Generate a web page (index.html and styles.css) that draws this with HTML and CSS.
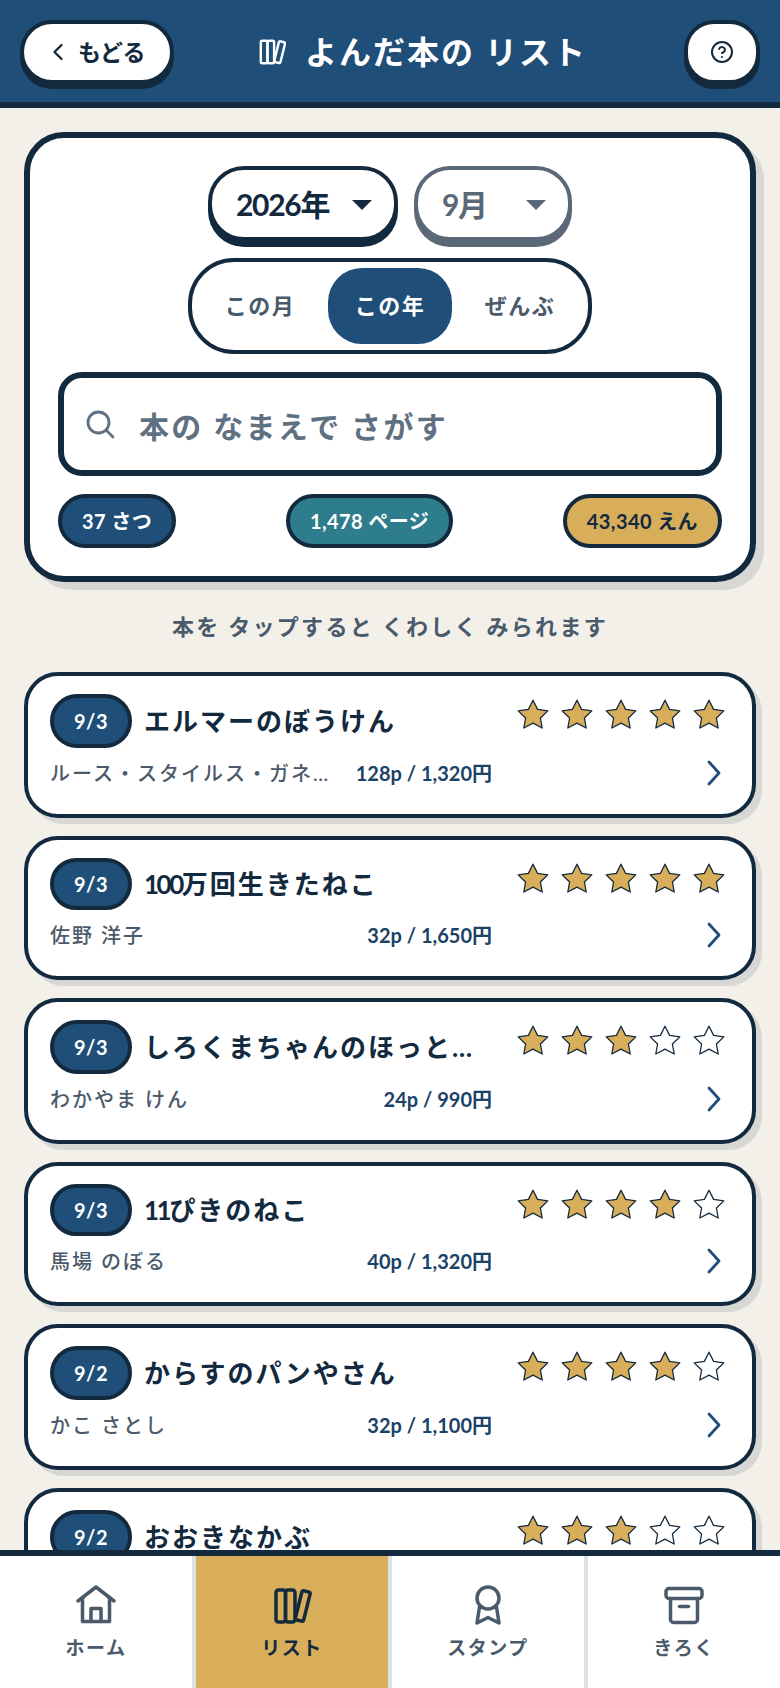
FILE: index.html
```html
<!DOCTYPE html>
<html lang="ja">
<head>
<meta charset="utf-8">
<title>よんだ本の リスト</title>
<link rel="stylesheet" href="styles.css">
</head>
<body>
<div class="app">
  <header class="topbar">
    <button class="back-btn" type="button">
      <svg class="back-icon" viewBox="0 0 24 24"><path d="M15 18l-6-6 6-6"/></svg>
      <span>もどる</span>
    </button>
    <h1 class="page-title">
      <svg class="title-icon" viewBox="0 0 40 40"><rect x="4" y="4" width="9.5" height="32" rx="2"/><rect x="13.5" y="4" width="9.5" height="32" rx="2"/><rect x="26.5" y="5" width="9" height="30.5" rx="2" transform="rotate(14 31 20)"/></svg>
      <span>よんだ本の リスト</span>
    </h1>
    <button class="help-btn" type="button" aria-label="ヘルプ">
      <svg class="help-icon" viewBox="0 0 24 24"><circle cx="12" cy="12" r="10"/><path d="M9.1 9a3 3 0 0 1 5.8 1c0 2-3 3-3 3"/><path d="M12 17h.01"/></svg>
    </button>
  </header>

  <main class="content">
    <section class="panel">
      <div class="selects">
        <div class="select select-year">
          <span>2026年</span>
          <svg class="caret" viewBox="0 0 20 10"><path d="M0 0H20L10 10Z"/></svg>
        </div>
        <div class="select select-month">
          <span>9月</span>
          <svg class="caret" viewBox="0 0 20 10"><path d="M0 0H20L10 10Z"/></svg>
        </div>
      </div>
      <div class="toggle">
        <button class="toggle-item" type="button">この月</button>
        <button class="toggle-item is-active" type="button">この年</button>
        <button class="toggle-item" type="button">ぜんぶ</button>
      </div>
      <label class="search">
        <svg class="search-icon" viewBox="0 0 32 32"><circle cx="14.5" cy="14.5" r="10.5"/><path d="M22.5 22.5L29 29"/></svg>
        <input class="search-input" type="text" placeholder="本の なまえで さがす">
      </label>
      <div class="stats">
        <span class="stat stat-books">37 さつ</span>
        <span class="stat stat-pages">1,478 ページ</span>
        <span class="stat stat-yen">43,340 えん</span>
      </div>
    </section>

    <p class="hint">本を タップすると くわしく みられます</p>

    <div class="cards">
      <article class="card">
        <div class="card-top">
          <div class="lead"><span class="date">9/3</span><span class="book-title">エルマーのぼうけん</span></div>
          <div class="stars">
            <svg class="star on" viewBox="0 0 32 30"><use href="#star"/></svg><svg class="star on" viewBox="0 0 32 30"><use href="#star"/></svg><svg class="star on" viewBox="0 0 32 30"><use href="#star"/></svg><svg class="star on" viewBox="0 0 32 30"><use href="#star"/></svg><svg class="star on" viewBox="0 0 32 30"><use href="#star"/></svg>
          </div>
        </div>
        <div class="card-bottom">
          <div class="info"><span class="author">ルース・スタイルス・ガネット</span><span class="price">128p / 1,320円</span></div>
          <svg class="chev" viewBox="0 0 16 26"><path d="M3 2L13 13L3 24"/></svg>
        </div>
      </article>

      <article class="card card-short">
        <div class="card-top">
          <div class="lead"><span class="date">9/3</span><span class="book-title"><span class="num">100</span>万回生きたねこ</span></div>
          <div class="stars">
            <svg class="star on" viewBox="0 0 32 30"><use href="#star"/></svg><svg class="star on" viewBox="0 0 32 30"><use href="#star"/></svg><svg class="star on" viewBox="0 0 32 30"><use href="#star"/></svg><svg class="star on" viewBox="0 0 32 30"><use href="#star"/></svg><svg class="star on" viewBox="0 0 32 30"><use href="#star"/></svg>
          </div>
        </div>
        <div class="card-bottom">
          <div class="info"><span class="author">佐野 洋子</span><span class="price">32p / 1,650円</span></div>
          <svg class="chev" viewBox="0 0 16 26"><path d="M3 2L13 13L3 24"/></svg>
        </div>
      </article>

      <article class="card">
        <div class="card-top">
          <div class="lead"><span class="date">9/3</span><span class="book-title">しろくまちゃんのほっとけーき</span></div>
          <div class="stars">
            <svg class="star on" viewBox="0 0 32 30"><use href="#star"/></svg><svg class="star on" viewBox="0 0 32 30"><use href="#star"/></svg><svg class="star on" viewBox="0 0 32 30"><use href="#star"/></svg><svg class="star" viewBox="0 0 32 30"><use href="#star"/></svg><svg class="star" viewBox="0 0 32 30"><use href="#star"/></svg>
          </div>
        </div>
        <div class="card-bottom">
          <div class="info"><span class="author">わかやま けん</span><span class="price">24p / 990円</span></div>
          <svg class="chev" viewBox="0 0 16 26"><path d="M3 2L13 13L3 24"/></svg>
        </div>
      </article>

      <article class="card card-short">
        <div class="card-top">
          <div class="lead"><span class="date">9/3</span><span class="book-title"><span class="num">11</span>ぴきのねこ</span></div>
          <div class="stars">
            <svg class="star on" viewBox="0 0 32 30"><use href="#star"/></svg><svg class="star on" viewBox="0 0 32 30"><use href="#star"/></svg><svg class="star on" viewBox="0 0 32 30"><use href="#star"/></svg><svg class="star on" viewBox="0 0 32 30"><use href="#star"/></svg><svg class="star" viewBox="0 0 32 30"><use href="#star"/></svg>
          </div>
        </div>
        <div class="card-bottom">
          <div class="info"><span class="author">馬場 のぼる</span><span class="price">40p / 1,320円</span></div>
          <svg class="chev" viewBox="0 0 16 26"><path d="M3 2L13 13L3 24"/></svg>
        </div>
      </article>

      <article class="card">
        <div class="card-top">
          <div class="lead"><span class="date">9/2</span><span class="book-title">からすのパンやさん</span></div>
          <div class="stars">
            <svg class="star on" viewBox="0 0 32 30"><use href="#star"/></svg><svg class="star on" viewBox="0 0 32 30"><use href="#star"/></svg><svg class="star on" viewBox="0 0 32 30"><use href="#star"/></svg><svg class="star on" viewBox="0 0 32 30"><use href="#star"/></svg><svg class="star" viewBox="0 0 32 30"><use href="#star"/></svg>
          </div>
        </div>
        <div class="card-bottom">
          <div class="info"><span class="author">かこ さとし</span><span class="price">32p / 1,100円</span></div>
          <svg class="chev" viewBox="0 0 16 26"><path d="M3 2L13 13L3 24"/></svg>
        </div>
      </article>

      <article class="card">
        <div class="card-top">
          <div class="lead"><span class="date">9/2</span><span class="book-title">おおきなかぶ</span></div>
          <div class="stars">
            <svg class="star on" viewBox="0 0 32 30"><use href="#star"/></svg><svg class="star on" viewBox="0 0 32 30"><use href="#star"/></svg><svg class="star on" viewBox="0 0 32 30"><use href="#star"/></svg><svg class="star" viewBox="0 0 32 30"><use href="#star"/></svg><svg class="star" viewBox="0 0 32 30"><use href="#star"/></svg>
          </div>
        </div>
      </article>
    </div>
  </main>

  <nav class="tabbar">
    <a class="tab">
      <svg class="tab-icon" viewBox="0 0 40 40"><path d="M2 16L20 2L38 16"/><path d="M6.500 13V36.500H33.500V13"/><path d="M15 36.500V23.500H25V36.500"/></svg>
      <span class="tab-label">ホーム</span>
    </a>
    <a class="tab is-current">
      <svg class="tab-icon" viewBox="0 0 40 40"><rect x="4" y="5" width="9.500" height="32" rx="2.500"/><rect x="13.500" y="5" width="9.500" height="32" rx="2.500"/><rect x="26.500" y="6" width="8.500" height="30" rx="2" transform="rotate(14 31 21)"/></svg>
      <span class="tab-label">リスト</span>
    </a>
    <a class="tab">
      <svg class="tab-icon" viewBox="0 0 40 40"><circle cx="20" cy="13" r="11"/><path d="M11.500 22L9 38L20 32.500L31 38L28.500 22"/></svg>
      <span class="tab-label">スタンプ</span>
    </a>
    <a class="tab">
      <svg class="tab-icon" viewBox="0 0 40 40"><rect x="2" y="3.500" width="36" height="10" rx="3"/><path d="M6.500 13.500V34.500A3 3 0 0 0 9.500 37.500H30.500A3 3 0 0 0 33.500 34.500V13.500"/><path d="M15.500 21.500H24.500"/></svg>
      <span class="tab-label">きろく</span>
    </a>
  </nav>
</div>

<svg class="defs" aria-hidden="true">
  <symbol id="star" viewBox="0 0 32 30">
    <path d="M16 1.200L20.600 10.400L30.800 11.900L23.400 19L25.200 29L16 24.200L6.800 29L8.600 19L1.200 11.900L11.400 10.400Z"/>
  </symbol>
</svg>
</body>
</html>
```

FILE: styles.css
```css
* { box-sizing: border-box; }

html, body {
  margin: 0;
  padding: 0;
  height: 100%;
}

body {
  background: #f3f0ea;
  color: #132a3e;
  font-family: "Lato", "Noto Sans CJK JP", "Noto Sans", sans-serif;
  font-weight: 700;
  overflow: hidden;
}

button {
  font: inherit;
  color: inherit;
  padding: 0;
  cursor: pointer;
}

.defs {
  width: 0;
  height: 0;
  position: absolute;
}

.app {
  height: 100vh;
  display: flex;
  flex-direction: column;
}

/* header */
.topbar {
  flex: none;
  height: 108px;
  padding: 20px 20px 18px;
  background: #1f4e79;
  border-bottom: 6px solid #132a3e;
  display: flex;
  align-items: center;
}

.back-btn {
  width: 154px;
  height: 64px;
  padding-left: 20px;
  background: #fff;
  border: 4px solid #132a3e;
  border-radius: 32px;
  box-shadow: 0 5px 0 #132a3e;
  display: flex;
  align-items: center;
  gap: 6px;
  font-size: 23px;
  line-height: 32px;
  letter-spacing: -0.5px;
}

.back-icon {
  width: 28px;
  height: 28px;
  fill: none;
  stroke: #132a3e;
  stroke-width: 2;
  stroke-linecap: round;
  stroke-linejoin: round;
}

.page-title {
  flex: 1;
  margin: 0;
  padding-right: 13px;
  display: flex;
  align-items: center;
  justify-content: center;
  gap: 19px;
  color: #fff;
  font-size: 32px;
  line-height: 40px;
  font-weight: 700;
  letter-spacing: 2px;
}

.title-icon {
  width: 28px;
  height: 28px;
  fill: none;
  stroke: #fff;
  stroke-width: 3.500;
}

.help-btn {
  width: 76px;
  height: 64px;
  background: #fff;
  border: 4px solid #132a3e;
  border-radius: 30px;
  box-shadow: 0 5px 0 #132a3e;
  display: flex;
  align-items: center;
  justify-content: center;
}

.help-icon {
  width: 24px;
  height: 24px;
  fill: none;
  stroke: #132a3e;
  stroke-width: 2;
  stroke-linecap: round;
  stroke-linejoin: round;
}

/* content */
.content {
  flex: 1;
  min-height: 0;
  overflow: hidden;
  padding: 24px 24px 0;
}

.panel {
  height: 450px;
  padding: 28px;
  background: #fff;
  border: 6px solid #132a3e;
  border-radius: 40px;
  box-shadow: 8px 8px 0 rgba(19, 42, 62, 0.12);
  display: flex;
  flex-direction: column;
  align-items: center;
}

.selects {
  display: flex;
  gap: 16px;
}

.select {
  height: 75px;
  padding: 0 22px 0 24px;
  background: #fff;
  border: 4px solid currentColor;
  border-radius: 36px;
  display: flex;
  align-items: center;
  justify-content: space-between;
  font-size: 30px;
  line-height: 40px;
  letter-spacing: -1.300px;
}

.select-year {
  width: 190px;
  color: #132a3e;
  box-shadow: 0 6px 0 #132a3e;
}

.select-month {
  width: 158px;
  color: #5a6878;
  box-shadow: 0 6px 0 #5a6878;
}

.caret {
  width: 20px;
  height: 10px;
  fill: currentColor;
  margin-top: 3px;
}

.toggle {
  margin-top: 17px;
  padding: 6px;
  width: 404px;
  height: 96px;
  border: 4px solid #132a3e;
  border-radius: 46px;
  display: flex;
  gap: 6px;
}

.toggle-item {
  flex: 1;
  background: transparent;
  border: 0;
  border-radius: 34px;
  color: #4a5a6a;
  font-size: 22px;
  line-height: 30px;
  letter-spacing: 1.500px;
}

.toggle-item.is-active {
  background: #1f4e79;
  color: #fff;
}

.search {
  margin-top: 18px;
  width: 100%;
  height: 104px;
  padding-left: 20px;
  border: 6px solid #132a3e;
  border-radius: 24px;
  display: flex;
  align-items: center;
  gap: 23px;
}

.search-icon {
  flex: none;
  width: 32px;
  height: 32px;
  fill: none;
  stroke: #5f7082;
  stroke-width: 2.800;
  stroke-linecap: round;
}

.search-input {
  flex: 1;
  min-width: 0;
  border: 0;
  outline: 0;
  padding: 4px 0 0;
  background: transparent;
  font: inherit;
  font-size: 30px;
  line-height: 40px;
  letter-spacing: 2.300px;
  color: #132a3e;
}

.search-input::placeholder {
  color: #5f7082;
  opacity: 1;
}

.stats {
  margin-top: 18px;
  width: 100%;
  display: flex;
  justify-content: space-between;
}

.stat {
  height: 54px;
  padding: 0 20px;
  border: 4px solid #132a3e;
  border-radius: 27px;
  display: flex;
  align-items: center;
  font-size: 20px;
  line-height: 28px;
  letter-spacing: 0.400px;
}

.stat-books { background: #1f4e79; color: #fff; }
.stat-pages { background: #2e7d8c; color: #fff; }
.stat-yen { background: #d8ae5a; color: #132a3e; }

.hint {
  margin: 29px 0;
  text-align: center;
  color: #4a5a6a;
  font-size: 22px;
  line-height: 32px;
  letter-spacing: 2.300px;
}

/* cards */
.cards {
  display: flex;
  flex-direction: column;
  gap: 18px;
}

.card {
  flex: none;
  padding: 18px 22px;
  background: #fff;
  border: 4px solid #132a3e;
  border-radius: 34px;
  box-shadow: 6px 6px 0 rgba(19, 42, 62, 0.12);
}

.card-top {
  display: flex;
  justify-content: space-between;
  align-items: flex-start;
}

.lead {
  width: 432px;
  display: flex;
  align-items: center;
  gap: 12px;
}

.date {
  flex: none;
  height: 54px;
  padding: 0 20px;
  background: #1f4e79;
  color: #fff;
  border: 4px solid #132a3e;
  border-radius: 27px;
  display: flex;
  align-items: center;
  font-size: 20px;
  line-height: 28px;
  letter-spacing: 0.5px;
}

.card-short .date {
  height: 52px;
}

.book-title {
  min-width: 0;
  white-space: nowrap;
  overflow: hidden;
  text-overflow: ellipsis;
  font-size: 26px;
  line-height: 38px;
  letter-spacing: 2px;
}

.num {
  letter-spacing: -2.500px;
}

.stars {
  display: flex;
  gap: 12px;
  margin: 5px 5px 0 0;
}

.star {
  width: 32px;
  height: 30px;
  fill: #fff;
  stroke: #132a3e;
  stroke-width: 1.300;
  stroke-linejoin: round;
}

.star.on {
  fill: #d8ae5a;
}

.card-bottom {
  height: 48px;
  padding-top: 2px;
  display: flex;
  align-items: center;
  justify-content: space-between;
}

.info {
  width: 442px;
  display: flex;
  align-items: center;
  gap: 20px;
}

.author {
  flex: 1;
  min-width: 0;
  white-space: nowrap;
  overflow: hidden;
  text-overflow: ellipsis;
  color: #4a5a6a;
  font-size: 20px;
  line-height: 28px;
  font-weight: 500;
  letter-spacing: 2px;
}

.price {
  flex: none;
  color: #1b4267;
  font-size: 20px;
  line-height: 28px;
}

.chev {
  width: 16px;
  height: 26px;
  margin-right: 8px;
  fill: none;
  stroke: #1f4e79;
  stroke-width: 2.800;
  stroke-linecap: round;
  stroke-linejoin: round;
}

/* bottom nav */
.tabbar {
  flex: none;
  height: 138px;
  background: #dde2e8;
  border-top: 6px solid #132a3e;
  display: grid;
  grid-template-columns: repeat(4, 1fr);
  gap: 4px;
}

.tab {
  padding-top: 2px;
  background: #fff;
  color: #4a5a6a;
  display: flex;
  flex-direction: column;
  align-items: center;
  justify-content: center;
  gap: 10px;
}

.tab.is-current {
  background: #d8ae5a;
  color: #132a3e;
}

.tab-icon {
  width: 40px;
  height: 40px;
  fill: none;
  stroke: currentColor;
  stroke-width: 3.500;
  stroke-linecap: round;
  stroke-linejoin: round;
}

.tab-label {
  font-size: 19px;
  line-height: 26px;
  letter-spacing: 1.500px;
}
```
